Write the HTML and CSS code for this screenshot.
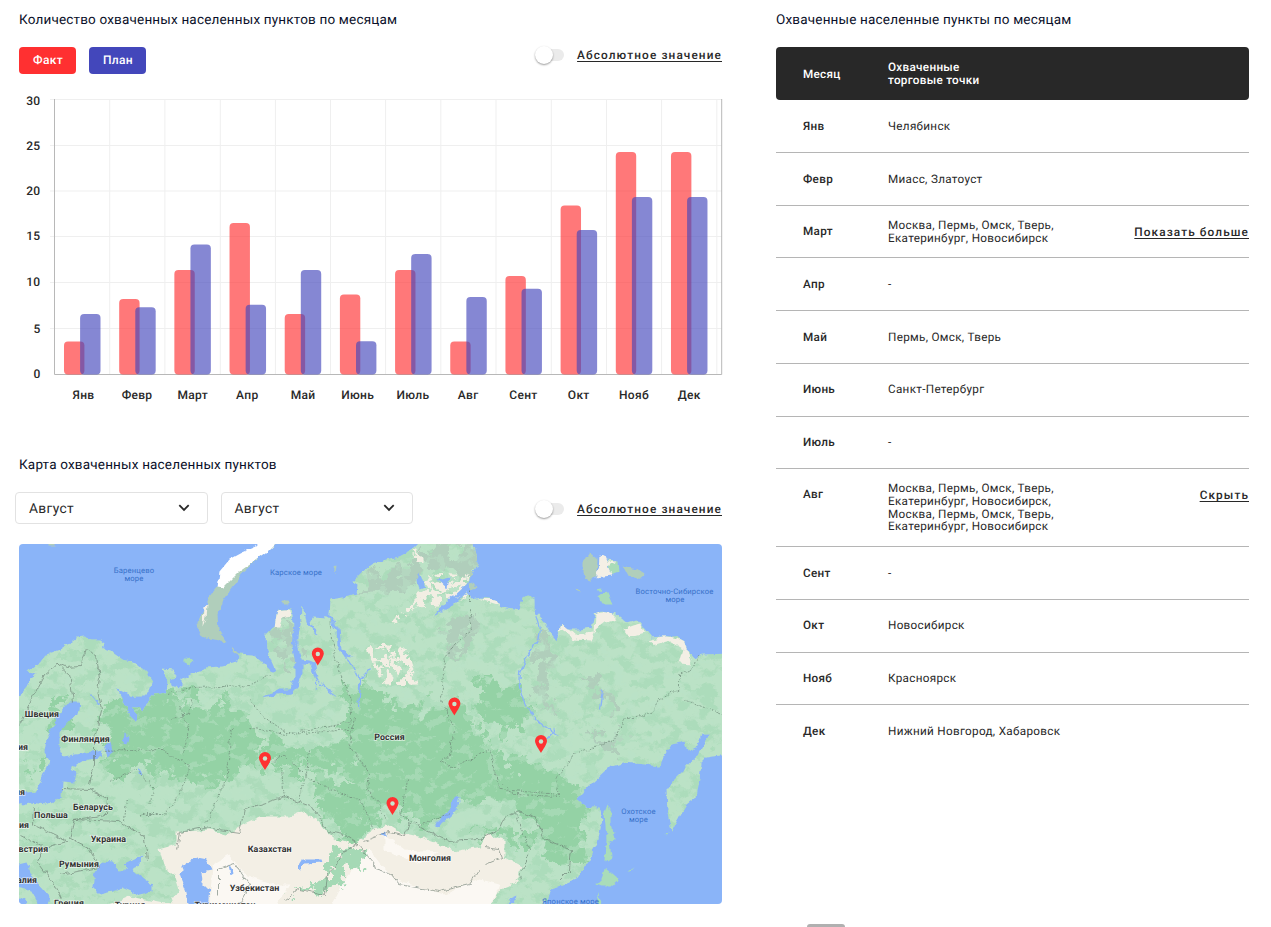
FILE: index.html
```html
<!DOCTYPE html>
<html lang="ru">
<head>
<meta charset="utf-8">
<title>Охваченные населенные пункты</title>
<link rel="stylesheet" href="styles.css">
</head>
<body>
<main class="dashboard">
  <div class="left">
    <section class="chart-card">
      <h2 class="title">Количество охваченных населенных пунктов по месяцам</h2>
      <div class="toolbar">
        <div class="legend"><button class="chip chip-fact">Факт</button><button class="chip chip-plan">План</button></div>
        <div class="toggle"><span class="switch"><i></i></span><a class="link">Абсолютное значение</a></div>
      </div>
      <svg class="chart" viewBox="19 90 704 320" width="704" height="320">
        <path class="grid" d="M50 99.5H722M50 145.5H722M50 191H722M50 236.5H722M50 282.5H722M50 328.5H722M109.7 99V374M164.9 99V374M220.3 99V374M275.4 99V374M330.5 99V374M385.6 99V374M440.8 99V374M496 99V374M551.3 99V374M606.5 99V374M661.6 99V374M716.8 99V374"/>
        <path class="axis" d="M54.5 99V374.5H721.7V99"/>
        <g class="fact" id="fact"></g>
        <g class="plan" id="plan"></g>
        <g class="ylab"><text x="40.5" y="104.5">30</text><text x="40.5" y="149.5">25</text><text x="40.5" y="194.5">20</text><text x="40.5" y="239.5">15</text><text x="40.5" y="286">10</text><text x="40.5" y="332.5">5</text><text x="40.5" y="378">0</text></g>
        <g class="xlab"><text x="83.5" y="399">Янв</text><text x="137" y="399">Февр</text><text x="192.7" y="399">Март</text><text x="247.3" y="399">Апр</text><text x="303" y="399">Май</text><text x="357.7" y="399">Июнь</text><text x="413" y="399">Июль</text><text x="468.2" y="399">Авг</text><text x="523.5" y="399">Сент</text><text x="578.7" y="399">Окт</text><text x="634" y="399">Нояб</text><text x="689.3" y="399">Дек</text></g>
      </svg>
    </section>
    <section class="map-card">
      <h2 class="title">Карта охваченных населенных пунктов</h2>
      <div class="toolbar map-toolbar">
        <div class="selects">
          <div class="select"><span>Август</span><svg width="12" height="8" viewBox="0 0 12 8"><path d="M1.3 1.2L6 5.9L10.7 1.2"/></svg></div>
          <div class="select"><span>Август</span><svg width="12" height="8" viewBox="0 0 12 8"><path d="M1.3 1.2L6 5.9L10.7 1.2"/></svg></div>
        </div>
        <div class="toggle"><span class="switch"><i></i></span><a class="link">Абсолютное значение</a></div>
      </div>
      <svg class="map" viewBox="19 544 703 360" width="703" height="360">
        <defs>
          <filter id="rough" filterUnits="userSpaceOnUse" x="0" y="530" width="740" height="390"><feTurbulence type="fractalNoise" baseFrequency=".13" numOctaves="3" seed="4"/><feDisplacementMap in="SourceGraphic" scale="6" xChannelSelector="R" yChannelSelector="G"/></filter>
          <filter id="ragged" filterUnits="userSpaceOnUse" x="0" y="500" width="760" height="440"><feTurbulence type="fractalNoise" baseFrequency=".06" numOctaves="4" seed="9"/><feDisplacementMap in="SourceGraphic" scale="46" xChannelSelector="R" yChannelSelector="G"/></filter>
          <filter id="woods" color-interpolation-filters="sRGB" filterUnits="userSpaceOnUse" x="19" y="544" width="703" height="360"><feTurbulence type="fractalNoise" baseFrequency=".06 .08" numOctaves="5" seed="21"/><feColorMatrix values="0 0 0 0 .62  0 0 0 0 .84  0 0 0 0 .69  10 0 0 0 -4.900"/></filter>
          <filter id="meadow" color-interpolation-filters="sRGB" filterUnits="userSpaceOnUse" x="19" y="544" width="703" height="360"><feTurbulence type="fractalNoise" baseFrequency=".08 .11" numOctaves="5" seed="33"/><feColorMatrix values="0 0 0 0 .73  0 0 0 0 .89  0 0 0 0 .78  0 14 0 0 -7.900"/></filter>
          <filter id="sand" color-interpolation-filters="sRGB" filterUnits="userSpaceOnUse" x="19" y="544" width="703" height="360"><feTurbulence type="fractalNoise" baseFrequency=".12" numOctaves="3" seed="5" result="n"/><feColorMatrix values="0 0 0 0 .95  0 0 0 0 .935  0 0 0 0 .89  26 0 0 0 -12.300"/><feComposite in2="SourceAlpha" operator="in"/></filter>
          <clipPath id="land"><path d="M10 705L25 693 30 682 37 673 28 672 40 665 47 655 60 650 68 645 77 638 85 637 92 640 100 640 105 644 103 650 113 653 123 660 137 663 147 672 153 682 152 690 145 697 133 697 123 692 115 688 120 693 125 703 128 713 137 722 138 715 133 708 138 708 143 712 148 702 155 695 163 694 167 692 168 682 163 669 173 670 177 677 170 680 173 687 182 688 182 680 193 674 207 668 223 667 237 663 240 657 238 654 253 655 263 663 272 672 277 672 273 663 268 650 267 635 275 627 278 610 292 610 294 622 293 635 297 648 301 625 302 607 305 613 307 623 318 637 317 630 310 625 315 617 327 618 335 623 340 630 335 621 330 616 331 600 350 597 357 595 358 585 353 582 363 572 373 565 387 560 400 557 413 550 423 540H473L477 555 478 565 473 575 467 585 453 598 460 598 467 593 473 600 480 598 497 600 502 607 520 610 523 598 528 595 535 598 535 612 545 623 550 632 557 641 562 625 568 630 580 630 592 628 595 615 603 612 617 615 627 623 637 620 643 627 652 638 663 637 677 637 685 643 687 650 693 658 703 655 730 654V755L713 757 707 758 702 763 700 780 697 797 687 805 680 817 672 831 668 813 667 790 675 780 687 768 697 757 703 747 710 735 702 735 697 748 688 752 685 742 672 745 663 760 660 767 647 765 623 763 610 767 593 783 577 800 587 808 600 808 603 820 598 843 590 860 577 880 565 885 552 890 542 910H10Z"/></clipPath>
          <g id="pin"><path fill="#ff3131" d="M0 8.6C-1.5 5.8-6-.1-6-3.4a6 6 0 0 1 12 0C6-.1 1.500 5.800 0 8.600z"/><circle cy="-3" r="2.2" fill="#c8e5cf"/></g>
        </defs>
        <rect x="19" y="544" width="703" height="360" fill="#8ab4f8"/>
        <g filter="url(#rough)" transform="translate(-.5 -.5)">
          <g clip-path="url(#land)">
            <rect x="10" y="535" width="730" height="380" fill="#bbe2c6"/>
            <rect x="19" y="630" width="703" height="274" filter="url(#woods)" opacity=".5"/>
            <g filter="url(#ragged)">
              <path fill="#94d2a5" d="M100 700L170 698 235 705 262 735 250 770 215 790 150 770 110 780 105 740ZM345 690L365 680 400 708 470 708 490 750 530 765 575 780 590 830 575 870 540 850 520 805 460 800 435 825 395 810 360 800 345 760ZM50 725L62 690 72 705 57 735 45 770 34 780ZM262 745L350 745 350 770 270 765ZM480 830L520 830 520 850 500 840ZM300 770L370 790 375 825 345 845ZM480 680L525 690 530 720 500 730 480 720Z"/>
              <path fill="#b0cebb" d="M360 590L395 565 430 552 480 540 478 570 455 575 430 570 415 590 385 592ZM278 615L294 615 294 670 282 660ZM440 625L475 620 470 650 445 655ZM540 625L556 645 550 690 545 715 538 690ZM585 670L620 705 612 715 595 695ZM590 730L620 735 620 750 600 742Z"/>
            </g>
            <rect x="19" y="600" width="703" height="304" filter="url(#meadow)" opacity=".45"/>
            <g filter="url(#sand)"><path d="M412 550H424V563H408ZM430 575L440 573 470 575 466 600 440 607 415 608 400 625 392 622 415 600ZM367 650L375 643 408 648 418 685 385 686Z"/></g>
            <path fill="#f3efe5" d="M275 611L290 609 292 616 283 618 280 628 275 628ZM478 599L500 600 500 606ZM560 630L563 625 575 635 595 633 596 614 610 612 618 620 606 623 597 630 592 641 575 640ZM625 630L640 625 645 633 630 637ZM650 641L665 636 685 641 689 655 692 665 680 664 684 650 668 641 655 645Z"/>
            <path fill="#f3efe5" d="M160 850L177 845 177 833 210 830 227 835 247 823 260 817 290 817 302 812 317 820 327 832 337 840 353 845 363 840 373 830 387 825 400 833 420 837 440 845 455 852 480 847 487 835 505 840 505 857 523 867 517 883 500 890 490 910H100L130 897 170 905 180 890 175 875 165 868Z"/>
            <path fill="#fbf8f3" d="M213 865L230 855 245 875 275 885 290 885 275 910H210ZM345 880L370 850 395 880 445 895 480 880 500 885 490 910H330ZM385 835L405 850 440 852 420 865 385 850Z"/>
            <g filter="url(#ragged)"><path fill="#a5d9b5" d="M285 895L325 880 330 850 350 845 365 852 370 862 340 865 345 885 310 893Z"/></g>
            <g fill="#8ab4f8">
              <path d="M62 712L70 702 80 702 78 715 70 720 60 733 60 750 63 757 87 753 103 750 102 757 83 762 70 770 77 773 75 783 63 782 62 798 47 805 30 803 10 808V795L37 792 43 777 50 760 45 753 47 740 53 727ZM104 746L112 742 114 752 108 757ZM125 735L130 738 128 746 124 745ZM139 767L142 776 138 774Z"/>
              <path d="M93 888L95 873 103 862 113 863 122 873 130 868 142 878 153 885 153 892 140 895 123 888 113 892 100 895ZM123 865L143 855 138 867 130 870ZM180 875L187 863 197 858 207 860 212 870 202 872 203 883 210 890 208 910H190L187 893ZM10 867L27 863 35 880 50 897 47 910H42L30 890 10 885ZM10 893L25 900 27 910H10Z"/>
              <path d="M295 608L302 608 299 625 299 650 302 660 310 661 315 663 319 678 315 678 311 666 303 665 303 675 298 688 292 694 277 695 263 698 277 690 290 690 295 678 295 663 292 650ZM328 617L340 628 342 650 354 657 344 656 338 648 337 630ZM457 795L461 797 458 810 447 821 436 828 434 826 447 813ZM298 868L303 860 322 860 323 863 305 864 301 870ZM382 834L387 833 387 837ZM229 865L234 873 231 875ZM418 582L420 573 425 588 420 590ZM437 580L450 577 448 590ZM454 595L470 590 455 605 434 617 448 600ZM511 898L518 895 514 904 505 908Z"/>
            </g>
            <path class="river" d="M536 616Q543 632 537 642Q525 658 521 675Q519 690 526 705Q533 718 545 727L560 737M316 678Q320 685 337 697M317 678V690M344 655Q357 667 361 685L359 708M372 668L360 680 360 695M92 695L100 705M603 690L600 710M545 742L556 730"/>
          </g>
          <path fill="#b0cebb" d="M218 587L210 597 205 612 199 622 197 626 203 636 210 640 227 643 220 630 219 615 224 600 230 592 243 573 258 560 277 544 260 551 235 570ZM232 647L240 655 234 653ZM583 562L590 553 598 560 597 576 590 583 583 573ZM624 566L636 569 645 575 643 580 630 577ZM282 601H288V606H282ZM469 584L474 583 477 588 471 590ZM334 567L337 566 336 574ZM50 544H55V546H50ZM576 588L579 589 580 594Z"/>
          <path fill="#a9dcb9" d="M184 660L190 657 193 662 189 667 184 664ZM599 598L607 592 613 605 603 605ZM608 561L618 562 619 573 611 576ZM597 589L602 588 601 593ZM608 805L612 812 612 823 615 840 610 843 612 858 606 862 607 840 605 813ZM606 868L620 880 612 887 602 887 597 885 604 878ZM598 892L604 910H598ZM666 834L669 833 667 836ZM628 873L636 868 631 873Z"/>
          <path fill="#f4f0e6" d="M600 556L606 557 608 562 617 562 612 565 608 567 612 576 596 578 599 571ZM205 607L208 605 207 620 204 627Z"/>
          <path fill="#fff" d="M218 587L220 572 230 560 243 553 257 547 260 540H280L267 553 253 563 240 572 224 588Z"/>
          <path class="borders" d="M19 728L25 715 33 697 45 675 58 664 68 668 80 667 86 650 97 655 100 680 98 690 102 710 95 740 95 765 90 785M58 664L70 675 74 703M62 789L90 790 108 798 107 815 75 820 70 840M34 807L33 825 68 842 45 848 21 836M75 820L120 822 145 838 148 860M45 848L38 862 55 885 62 900M70 840L90 850 100 868 60 875M177 850L180 833 205 828 240 833 245 810 285 797 312 806 328 832 345 835 358 844M358 844L345 852 335 868 327 875 325 895 300 890 285 900M358 844L375 865 376 870 392 875 400 885 440 892 470 885 480 870M364 842L390 832 406 836 410 822 425 830 450 842 480 840 500 830 505 818 520 812 535 818 545 840 572 850 570 870 560 880M486 865L503 858 500 850 485 848M219 895V870L235 864 250 885 240 903"/>
          <path class="regions" d="M167 695L195 688 250 686 270 675M192 700L190 715 172 720M232 730L230 750 228 775 218 800 205 825M102 752L160 750 190 765 183 790 165 815 140 815M110 782L136 770 155 788 150 805M127 800L125 822M180 705L190 730 183 755M250 700L265 718 290 735 350 730 352 700 337 665 330 620M250 728L285 735 350 722M265 768L285 755 305 775 330 790 360 800 375 830M282 770L285 800M310 750L307 775 300 800M355 718L350 745 370 775 368 790 380 805 385 820M470 590L470 615 472 632 455 645 445 660 442 700 455 730 450 755 440 762 460 770M408 780L405 800 400 815 420 825 450 815M698 655L695 668 680 675 680 690 660 700 655 712 625 720 615 740 575 755 557 780 560 795 500 790 490 750 460 765M685 700L722 715M504 785L515 795 560 797M515 812L522 830 530 850 520 880"/>
        </g>
        <g class="sea-labels"><text x="134" y="573">Баренцево</text><text x="134" y="581">море</text><text x="296" y="575">Карское море</text><text x="674.500" y="593.500">Восточно-Сибирское</text><text x="675" y="601.500">море</text><text x="638.500" y="814">Охотское</text><text x="638.500" y="822">море</text><text x="570.500" y="903.500">Японское море</text></g>
        <g class="country-labels"><text x="42" y="716.500">Швеция</text><text x="85.500" y="742">Финляндия</text><text x="23" y="749.500">ия</text><text x="20" y="794.500">ия</text><text x="93" y="810">Беларусь</text><text x="51" y="818">Польша</text><text x="24" y="828">ия</text><text x="108.500" y="842">Украина</text><text x="31" y="851.500">австрия</text><text x="79" y="867">Румыния</text><text x="27" y="883">алия</text><text x="69" y="905.500">Греция</text><text x="130" y="908">Турция</text><text x="225" y="908">Туркменистан</text><text x="389.500" y="740">Россия</text><text x="269.700" y="851.500">Казахстан</text><text x="430" y="861">Монголия</text><text x="254.500" y="891">Узбекистан</text></g>
        <use href="#pin" x="317.800" y="657"/><use href="#pin" x="454.400" y="707"/><use href="#pin" x="541" y="744.500"/><use href="#pin" x="265" y="761.500"/><use href="#pin" x="392.500" y="806.500"/>
      </svg>
    </section>
  </div>
  <section class="right">
    <h2 class="title">Охваченные населенные пункты по месяцам</h2>
    <div class="table">
      <div class="row head"><b>Месяц</b><span>Охваченные<br>торговые точки</span></div>
      <div class="row"><b>Янв</b><span>Челябинск</span></div>
      <div class="row"><b>Февр</b><span>Миасс, Златоуст</span></div>
      <div class="row"><b>Март</b><span>Москва, Пермь, Омск, Тверь,<br>Екатеринбург, Новосибирск</span><a class="link">Показать больше</a></div>
      <div class="row"><b>Апр</b><span>-</span></div>
      <div class="row"><b>Май</b><span>Пермь, Омск, Тверь</span></div>
      <div class="row"><b>Июнь</b><span>Санкт-Петербург</span></div>
      <div class="row"><b>Июль</b><span>-</span></div>
      <div class="row tall"><b>Авг</b><span>Москва, Пермь, Омск, Тверь,<br>Екатеринбург, Новосибирск,<br>Москва, Пермь, Омск, Тверь,<br>Екатеринбург, Новосибирск</span><a class="link">Скрыть</a></div>
      <div class="row"><b>Сент</b><span>-</span></div>
      <div class="row"><b>Окт</b><span>Новосибирск</span></div>
      <div class="row"><b>Нояб</b><span>Красноярск</span></div>
      <div class="row"><b>Дек</b><span>Нижний Новгород, Хабаровск</span></div>
    </div>
    <div class="scroll-thumb"></div>
  </section>
</main>
<script src="chart.js"></script>
</body>
</html>
```
FILE: styles.css
```css
* { box-sizing: border-box; }
body { margin: 0; height: 927px; overflow: hidden; background: #fff; color: #282828; font-family: Roboto, "Noto Sans", sans-serif; text-rendering: geometricPrecision; }
.dashboard { display: grid; grid-template-columns: 703px 473px; column-gap: 54px; padding: 10px 0 0 19px; height: 927px; }
.title { margin: 0; height: 20px; font-size: 13.500px; line-height: 20px; font-weight: 400; letter-spacing: .18px; color: #0a0f29; white-space: nowrap; }
.toolbar { display: flex; justify-content: space-between; height: 27px; margin-top: 17px; }
.legend { display: flex; gap: 13px; }
.chip { width: 57px; height: 27px; padding: 0 0 0 1px; border: 0; border-radius: 4px; color: #fff; font: 500 12px/27px Roboto, sans-serif; letter-spacing: .3px; text-rendering: geometricPrecision; }
.chip-fact { background: #ff3031; }
.chip-plan { background: #4347bb; }
.toggle { display: flex; align-items: center; height: 16px; gap: 13px; }
.switch { position: relative; width: 29px; height: 12px; border-radius: 6px; background: #ebebeb; }
.switch i { position: absolute; left: 0; top: -3px; width: 18px; height: 18px; border-radius: 50%; background: #fff; box-shadow: 0 1px 2px rgba(0,0,0,.4); }
.link { padding-top: 1px; font-size: 11.800px; line-height: 15px; font-weight: 500; letter-spacing: 1.11px; text-decoration: underline; text-decoration-thickness: 1px; text-underline-offset: 2px; text-decoration-skip-ink: none; white-space: nowrap; }
.chart { display: block; margin-top: 16px; }
.grid { stroke: #efefef; fill: none; }
.axis { stroke: #b8b8b8; fill: none; }
.fact { fill: #ff3031; fill-opacity: .65; }
.plan { fill: #4347bb; fill-opacity: .65; }
.ylab, .xlab { font-size: 12px; font-weight: 500; letter-spacing: .3px; fill: #282828; }
.ylab { text-anchor: end; }
.xlab { text-anchor: middle; }
.map-card { margin-top: 45px; }
.map-toolbar { height: 32px; margin-top: 17px; }
.map-toolbar .toggle { margin-top: 9px; }
.selects { display: flex; gap: 13px; margin-left: -4px; }
.select { display: flex; align-items: center; justify-content: space-between; width: 192.500px; height: 32px; padding: 0 17px 0 13px; border: 1px solid #e2e2e2; border-radius: 4px; font-size: 13.800px; letter-spacing: .35px; }
.select span { padding-top: 1px; }
.select svg { fill: none; stroke: #282828; stroke-width: 1.800; }
.map { display: block; margin-top: 20px; border-radius: 4px; }
.river { fill: none; stroke: #8ab4f8; stroke-width: 1.300; }
.borders { fill: none; stroke: #68796f; stroke-width: .6; }
.regions { fill: none; stroke: #6f8a79; stroke-width: .7; stroke-dasharray: 2 1.300; }
.sea-labels { font-size: 7.700px; fill: #3871c9; text-anchor: middle; letter-spacing: .15px; }
.country-labels { font-size: 8.900px; font-weight: 700; letter-spacing: .1px; fill: #333; text-anchor: middle; stroke: #fff; stroke-opacity: .65; stroke-width: 1.500px; paint-order: stroke; }
.table { margin-top: 17.400px; }
.row { display: grid; grid-template-columns: 85px 1fr auto; align-items: center; height: 52.700px; padding-left: 27px; border-bottom: 1px solid #b5b5b5; font-size: 11.700px; line-height: 12.750px; letter-spacing: .31px; }
.row:last-child { border-bottom: 0; }
.row b { font-weight: 500; }
.head { height: 53px; border: 0; border-radius: 4px; background: #282828; color: #fff; font-weight: 500; }
.tall { height: 78px; align-items: start; padding-top: 13px; }
.tall b { margin-top: 6px; }
.tall .link { margin-top: 5px; }
.scroll-thumb { width: 38px; height: 6px; margin: 166px 0 0 31px; border-radius: 3px; background: #b0b0b0; }
```
FILE: chart.js
```js
const baseline = 374.5;
const tops = {
  fact: [341.5, 299, 270, 223, 314, 294.5, 270, 341.5, 276, 205.5, 152, 152],
  plan: [314, 307.3, 244.5, 304.8, 270, 341.3, 254, 297, 288.8, 230, 197, 197]
};
const start = { fact: 64, plan: 80.1 };
for (const key of ["fact", "plan"]) {
  document.getElementById(key).innerHTML = tops[key].map((y, i) =>
    `<rect x="${start[key] + i * 55.18}" y="${y}" width="20.4" height="${baseline - y}" rx="4"/>`).join("");
}
```
